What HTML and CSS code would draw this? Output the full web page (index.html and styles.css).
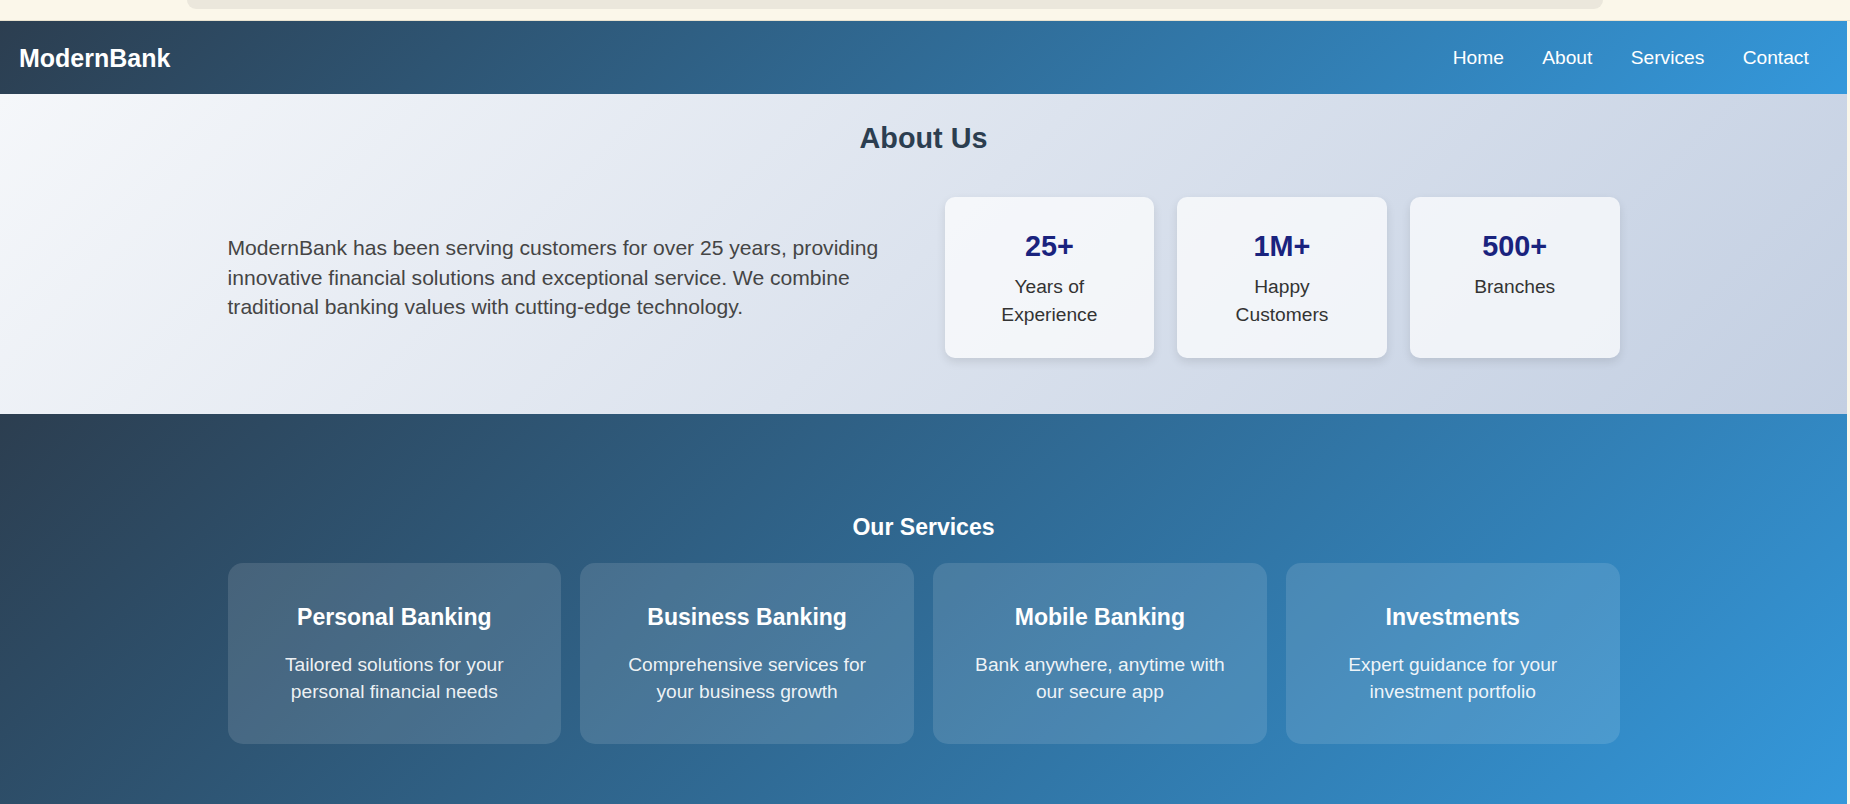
FILE: index.html
```html
<!DOCTYPE html>
<html lang="en">
<head>
<meta charset="utf-8">
<title>ModernBank</title>
<link rel="stylesheet" href="styles.css">
</head>
<body>
<div class="chrome"><div class="chrome-bar"></div></div>
<div class="page">
  <nav class="navbar">
    <div class="logo">ModernBank</div>
    <ul class="nav-links">
      <li><a href="#">Home</a></li>
      <li><a href="#">About</a></li>
      <li><a href="#">Services</a></li>
      <li><a href="#">Contact</a></li>
    </ul>
  </nav>
  <section class="about">
    <h2 class="about-title">About Us</h2>
    <div class="about-grid">
      <p class="about-text">ModernBank has been serving customers for over 25 years, providing innovative financial solutions and exceptional service. We combine traditional banking values with cutting-edge technology.</p>
      <div class="stats">
        <div class="stat"><div class="stat-num">25+</div><div class="stat-label">Years of Experience</div></div>
        <div class="stat"><div class="stat-num">1M+</div><div class="stat-label">Happy Customers</div></div>
        <div class="stat"><div class="stat-num">500+</div><div class="stat-label">Branches</div></div>
      </div>
    </div>
  </section>
  <section class="services">
    <h2 class="services-title">Our Services</h2>
    <div class="service-grid">
      <div class="service"><h3>Personal Banking</h3><p>Tailored solutions for your personal financial needs</p></div>
      <div class="service"><h3>Business Banking</h3><p>Comprehensive services for your business growth</p></div>
      <div class="service"><h3>Mobile Banking</h3><p>Bank anywhere, anytime with our secure app</p></div>
      <div class="service"><h3>Investments</h3><p>Expert guidance for your investment portfolio</p></div>
    </div>
  </section>
</div>
</body>
</html>
```
FILE: styles.css
```css
* { box-sizing: border-box; }
html, body { margin: 0; padding: 0; }
body {
  background: #fbf7ea;
  font-family: "Liberation Sans", Arial, sans-serif;
  overflow: hidden;
  height: 804px;
}
.chrome {
  height: 21px;
  padding-left: 187px;
  border-bottom: 1px solid #e9e2cf;
}
.chrome-bar {
  width: 1416px;
  height: 9px;
  background: #ebe7dc;
  border-radius: 0 0 14px 14px;
}
.page { width: 1847px; }
.navbar {
  height: 73px;
  padding: 0 19px;
  display: flex;
  align-items: center;
  justify-content: space-between;
  background: linear-gradient(135deg, #2c3e50 0%, #3498db 100%);
}
.logo {
  color: #fff;
  font-weight: bold;
  font-size: 25px;
  line-height: 30px;
}
.nav-links {
  list-style: none;
  margin: 0;
  padding: 0;
  display: flex;
}
.nav-links a {
  display: block;
  padding: 0 19.2px;
  color: #fff;
  text-decoration: none;
  font-size: 19.2px;
  line-height: 24px;
}
.about {
  background: linear-gradient(135deg, #f5f7fa 0%, #c3cfe2 100%);
  padding: 27px 0 56px;
}
.about-title {
  margin: 0 0 41px;
  text-align: center;
  font-size: 28.8px;
  line-height: 34.6px;
  color: #2c3e50;
}
.about-grid {
  max-width: 1392px;
  margin: 0 auto;
  display: grid;
  grid-template-columns: 1fr 1fr;
  gap: 42px;
  align-items: center;
}
.about-text {
  margin: 0;
  font-size: 21.1px;
  line-height: 29.4px;
  color: #454545;
}
.stats {
  display: grid;
  grid-template-columns: repeat(3, 1fr);
  gap: 23px;
}
.stat {
  background: rgba(255, 255, 255, 0.7);
  border-radius: 10px;
  box-shadow: 0 4px 10px rgba(0, 0, 0, 0.1);
  padding: 32px 32px 29px;
  text-align: center;
}
.stat-num {
  font-size: 28.8px;
  line-height: 34.6px;
  font-weight: bold;
  color: #1a237e;
  margin-bottom: 10px;
}
.stat-label {
  font-size: 19.2px;
  line-height: 28px;
  color: #333;
}
.services {
  background: linear-gradient(135deg, #2c3e50 0%, #3498db 100%);
  padding: 100px 0 61px;
  color: #fff;
}
.services-title {
  margin: 0 0 21px;
  text-align: center;
  font-size: 23.04px;
  line-height: 27.6px;
}
.service-grid {
  max-width: 1392px;
  margin: 0 auto;
  display: grid;
  grid-template-columns: repeat(4, 1fr);
  gap: 19.2px;
}
.service {
  background: rgba(255, 255, 255, 0.12);
  border-radius: 15px;
  padding: 41px 38.4px 39px;
  text-align: center;
}
.service h3 {
  margin: 0 0 20px;
  font-size: 23.04px;
  line-height: 27.6px;
}
.service p {
  margin: 0;
  font-size: 19.2px;
  line-height: 27px;
  color: rgba(255, 255, 255, 0.92);
}
```
